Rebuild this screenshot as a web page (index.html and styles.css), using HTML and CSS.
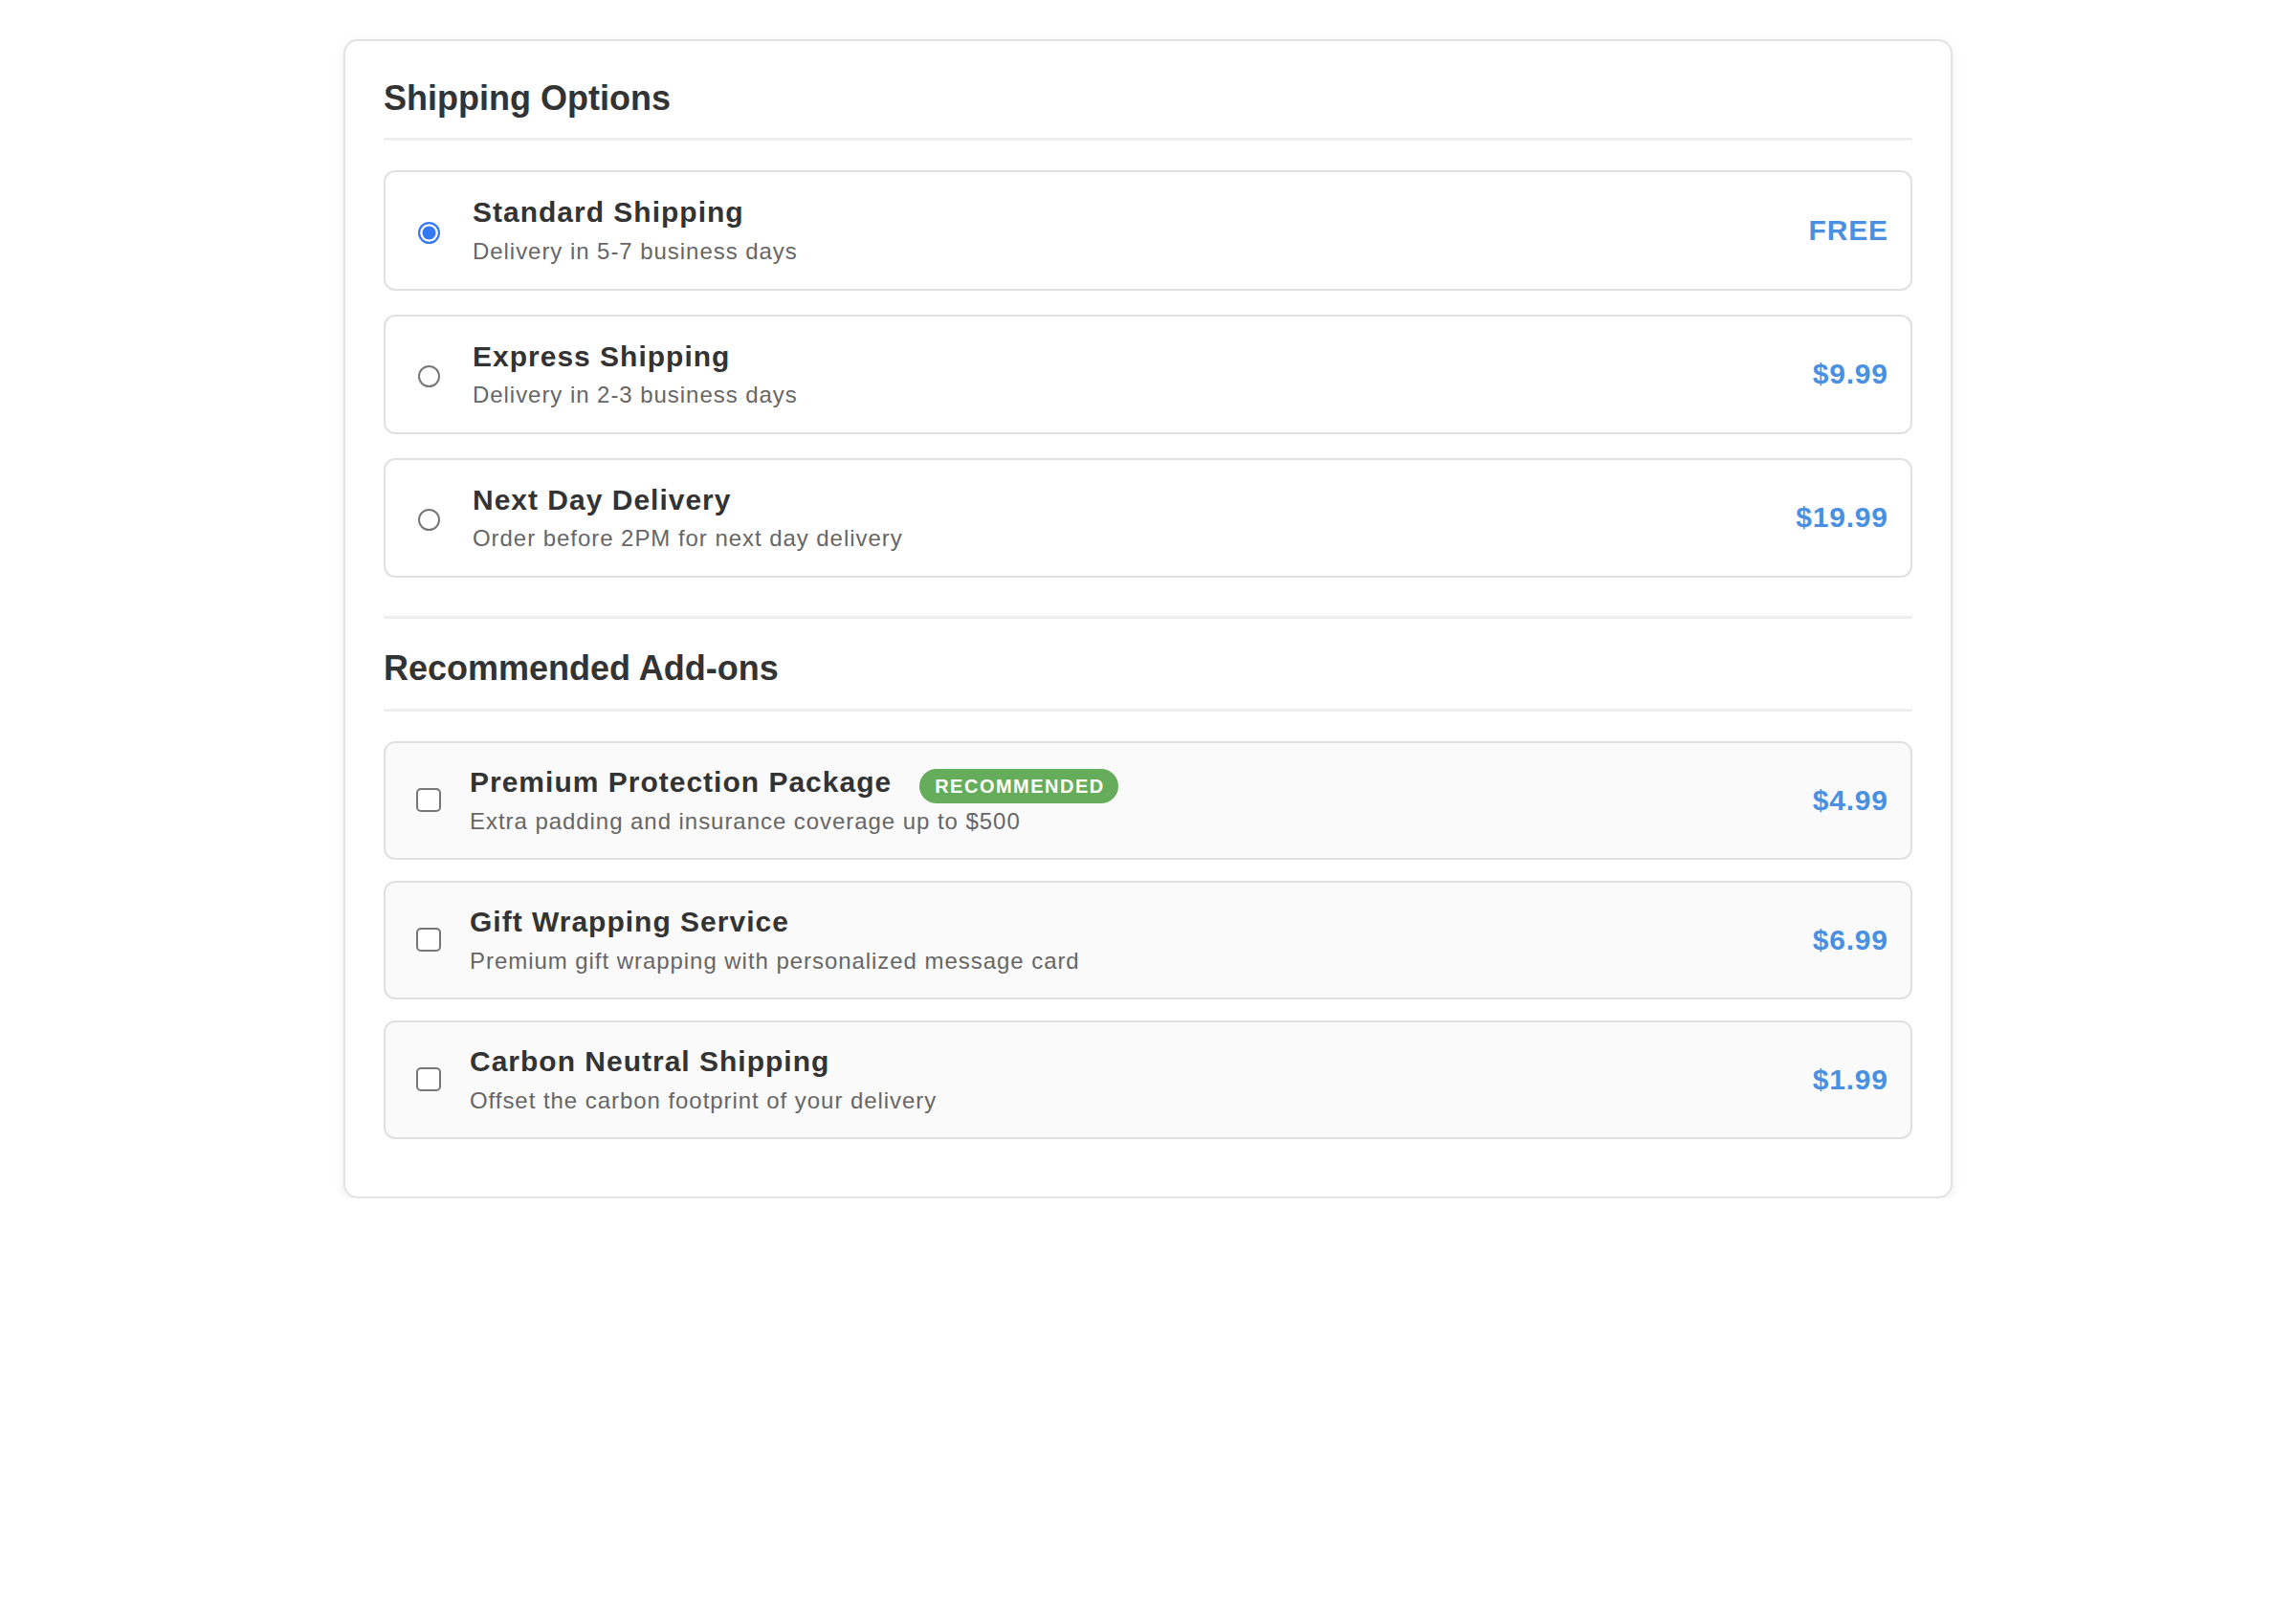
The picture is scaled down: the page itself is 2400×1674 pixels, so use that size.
FILE: index.html
```html
<!DOCTYPE html>
<html lang="en">
<head>
<meta charset="utf-8">
<title>Shipping Options</title>
<link rel="stylesheet" href="styles.css">
</head>
<body>
<div class="card">
  <section class="section">
    <h2 class="heading">Shipping Options</h2>
    <label class="option">
      <input class="radio" type="radio" name="ship" checked>
      <div class="info">
        <div class="title-row"><span class="title">Standard Shipping</span></div>
        <div class="desc">Delivery in 5-7 business days</div>
      </div>
      <div class="price">FREE</div>
    </label>
    <label class="option">
      <input class="radio" type="radio" name="ship">
      <div class="info">
        <div class="title-row"><span class="title">Express Shipping</span></div>
        <div class="desc">Delivery in 2-3 business days</div>
      </div>
      <div class="price">$9.99</div>
    </label>
    <label class="option">
      <input class="radio" type="radio" name="ship">
      <div class="info">
        <div class="title-row"><span class="title">Next Day Delivery</span></div>
        <div class="desc">Order before 2PM for next day delivery</div>
      </div>
      <div class="price">$19.99</div>
    </label>
  </section>
  <section class="section addons">
    <h2 class="heading">Recommended Add-ons</h2>
    <label class="option addon">
      <input class="check" type="checkbox">
      <div class="info">
        <div class="title-row"><span class="title">Premium Protection Package</span><span class="badge">RECOMMENDED</span></div>
        <div class="desc">Extra padding and insurance coverage up to $500</div>
      </div>
      <div class="price">$4.99</div>
    </label>
    <label class="option addon">
      <input class="check" type="checkbox">
      <div class="info">
        <div class="title-row"><span class="title">Gift Wrapping Service</span></div>
        <div class="desc">Premium gift wrapping with personalized message card</div>
      </div>
      <div class="price">$6.99</div>
    </label>
    <label class="option addon">
      <input class="check" type="checkbox">
      <div class="info">
        <div class="title-row"><span class="title">Carbon Neutral Shipping</span></div>
        <div class="desc">Offset the carbon footprint of your delivery</div>
      </div>
      <div class="price">$1.99</div>
    </label>
  </section>
</div>
</body>
</html>
```
FILE: styles.css
```css
* { box-sizing: border-box; }

html, body {
  margin: 0;
  padding: 0;
  background: #ffffff;
}

body {
  font-family: "Liberation Sans", Arial, Helvetica, sans-serif;
  color: #333333;
}

.card {
  width: 1682px;
  margin: 41px auto 0;
  background: #ffffff;
  border: 2px solid #e3e3e3;
  border-radius: 15px;
  box-shadow: 0 3px 12px rgba(0, 0, 0, 0.07);
  padding: 39px 40px 38px;
}

.heading {
  margin: 0 0 31px;
  font-size: 36px;
  font-weight: bold;
  line-height: 41.4px;
  color: #333333;
  padding-bottom: 21px;
  border-bottom: 3px solid #eeeeee;
}

.section > .option:last-child {
  margin-bottom: 0;
}

.addons {
  margin-top: 40.6px;
  border-top: 3px solid #eeeeee;
  padding-top: 31px;
}

.addons > .option:last-child {
  margin-bottom: 22px;
}

.option {
  display: flex;
  align-items: center;
  border: 2px solid #e0e0e0;
  border-radius: 12px;
  padding: 25px 24px 25px 24px;
  margin-bottom: 25px;
  background: #ffffff;
  cursor: pointer;
}

.option.addon {
  background: #fafafa;
  padding-top: 24.5px;
  padding-bottom: 24.5px;
  margin-bottom: 22px;
}

.radio {
  appearance: none;
  -webkit-appearance: none;
  flex: none;
  width: 23px;
  height: 23px;
  margin: 5px 34px 0 10px;
  border: 2px solid #767676;
  border-radius: 50%;
  background: #ffffff;
}

.radio:checked {
  border: 2.5px solid #3478f6;
  background: #3478f6;
  box-shadow: inset 0 0 0 2.5px #ffffff;
}

.check {
  appearance: none;
  -webkit-appearance: none;
  flex: none;
  width: 26px;
  height: 25px;
  margin: 0 30px 0 8px;
  border: 2.5px solid #767676;
  border-radius: 5px;
  background: #ffffff;
}

.info {
  flex: 1;
  min-width: 0;
}

.title-row {
  display: flex;
  align-items: center;
  height: 34.5px;
  margin-bottom: 9px;
}

.title {
  font-size: 30px;
  font-weight: bold;
  line-height: 34.5px;
  letter-spacing: 1px;
  color: #333333;
  white-space: nowrap;
}

.badge {
  flex: none;
  margin: 7px 0 0 29px;
  height: 36px;
  padding: 0 14px 0 16px;
  border-radius: 18px;
  background: #66ad5b;
  color: #ffffff;
  font-size: 20px;
  font-weight: bold;
  letter-spacing: 1.5px;
  line-height: 36px;
}

.desc {
  font-size: 24px;
  line-height: 27.6px;
  letter-spacing: 0.95px;
  color: #666666;
}

.price {
  flex: none;
  font-size: 30px;
  font-weight: bold;
  letter-spacing: 0.8px;
  color: #4a90e2;
  margin-right: -0.8px;
}
```
